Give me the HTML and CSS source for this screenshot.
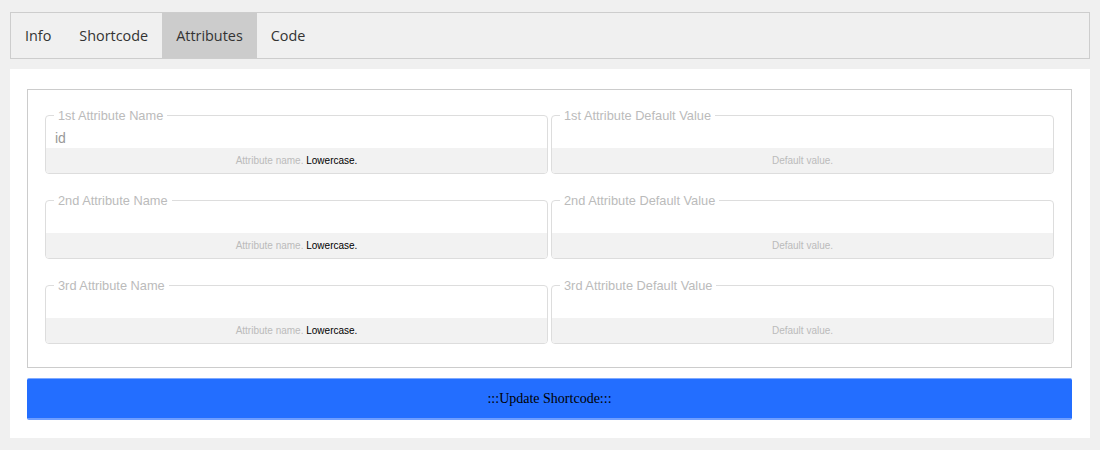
FILE: index.html
```html
<!DOCTYPE html>
<html>
<head>
<meta charset="utf-8">
<link rel="stylesheet" href="styles.css">
</head>
<body>
  <nav class="tabs">
    <a class="tab">Info</a>
    <a class="tab">Shortcode</a>
    <a class="tab active">Attributes</a>
    <a class="tab">Code</a>
  </nav>
  <section class="panel">
    <div class="box">
      <fieldset class="field">
        <legend>1st Attribute Name</legend>
        <input class="input" type="text" value="id">
        <div class="help"><span class="muted">Attribute name.</span> <span class="strong">Lowercase.</span></div>
      </fieldset>
      <fieldset class="field">
        <legend>1st Attribute Default Value</legend>
        <input class="input" type="text" value="">
        <div class="help"><span class="muted">Default value.</span></div>
      </fieldset>
      <fieldset class="field">
        <legend>2nd Attribute Name</legend>
        <input class="input" type="text" value="">
        <div class="help"><span class="muted">Attribute name.</span> <span class="strong">Lowercase.</span></div>
      </fieldset>
      <fieldset class="field">
        <legend>2nd Attribute Default Value</legend>
        <input class="input" type="text" value="">
        <div class="help"><span class="muted">Default value.</span></div>
      </fieldset>
      <fieldset class="field">
        <legend>3rd Attribute Name</legend>
        <input class="input" type="text" value="">
        <div class="help"><span class="muted">Attribute name.</span> <span class="strong">Lowercase.</span></div>
      </fieldset>
      <fieldset class="field">
        <legend>3rd Attribute Default Value</legend>
        <input class="input" type="text" value="">
        <div class="help"><span class="muted">Default value.</span></div>
      </fieldset>
    </div>
    <button class="update">:::Update Shortcode:::</button>
  </section>
</body>
</html>
```
FILE: styles.css
```css
html, body {
  margin: 0;
  background: #f0f0f0;
}
body {
  padding: 12px 10px;
  font-family: "Liberation Sans", Arial, sans-serif;
}
.tabs {
  display: flex;
  height: 45px;
  border: 1px solid #cdcdcd;
  background: #f0f0f0;
}
.tab {
  display: flex;
  align-items: center;
  padding: 0 14px;
  font-family: "Open Sans", sans-serif;
  font-size: 14.4px;
  color: #333;
  cursor: pointer;
}
.tab.active {
  background: #cccccc;
}
.panel {
  margin-top: 10px;
  background: #fff;
  padding: 20px 18px 18px 17px;
}
.box {
  border: 1px solid #cccccc;
  padding: 18px 17px 23px 17px;
  display: grid;
  grid-template-columns: 1fr 1fr;
  column-gap: 3px;
  row-gap: 19px;
}
.field {
  margin: 0;
  padding: 0;
  min-width: 0;
  border: 1px solid #dddddd;
  border-radius: 4px;
}
.field legend {
  margin-left: 8px;
  padding: 0 4px;
  font-size: 12.8px;
  line-height: 15px;
  color: #bbbbbb;
}
.input {
  display: block;
  box-sizing: border-box;
  width: 100%;
  height: 25px;
  margin: 0;
  padding: 4px 9px 0 9px;
  border: none;
  outline: none;
  background: transparent;
  font-family: "Liberation Sans", Arial, sans-serif;
  font-size: 14px;
  color: #999;
}
.help {
  height: 25px;
  line-height: 25px;
  background: #f2f2f2;
  text-align: center;
  font-size: 10px;
  border-radius: 0 0 3px 3px;
}
.muted {
  color: #bbbbbb;
}
.strong {
  color: #000;
}
.update {
  display: block;
  width: 100%;
  height: 42px;
  margin-top: 10px;
  padding: 0;
  border: none;
  border-top: 1px solid #7ea9ff;
  border-bottom: 2px solid #6f9eff;
  border-radius: 2px;
  background: #236eff;
  font-family: "Liberation Serif", "Times New Roman", serif;
  font-size: 14px;
  color: #000;
  cursor: pointer;
}
```
